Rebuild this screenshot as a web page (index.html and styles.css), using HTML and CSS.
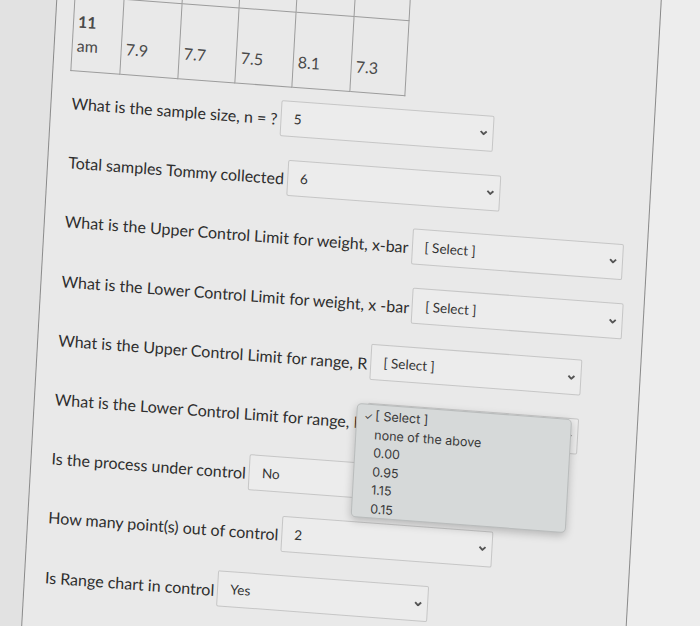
FILE: index.html
```html
<!DOCTYPE html>
<html>
<head>
<meta charset="utf-8">
<link rel="stylesheet" href="styles.css">
</head>
<body>
<div class="stage">
  <div class="panel">
    <table class="data">
      <tr class="prev">
        <td class="c0"></td><td class="c1"></td><td class="c2"></td><td class="c3"></td><td class="c4"></td><td class="c5"></td>
      </tr>
      <tr class="last">
        <td class="c0 time"><span class="hr">11</span><br>am</td>
        <td class="c1">7.9</td>
        <td class="c2">7.7</td>
        <td class="c3">7.5</td>
        <td class="c4">8.1</td>
        <td class="c5">7.3</td>
      </tr>
    </table>

    <div class="q first">
      <span class="lbl">What is the sample size, n = ?</span>
      <div class="sel wide"><span class="val">5</span><svg class="chev" viewBox="0 0 8 5"><polyline points="1,1 4,4 7,1"/></svg></div>
    </div>
    <div class="q">
      <span class="lbl">Total samples Tommy collected</span>
      <div class="sel wide"><span class="val">6</span><svg class="chev" viewBox="0 0 8 5"><polyline points="1,1 4,4 7,1"/></svg></div>
    </div>
    <div class="q">
      <span class="lbl">What is the Upper Control Limit for weight, x-bar</span>
      <div class="sel"><span class="val">[ Select ]</span><svg class="chev" viewBox="0 0 8 5"><polyline points="1,1 4,4 7,1"/></svg></div>
    </div>
    <div class="q">
      <span class="lbl">What is the Lower Control Limit for weight, x -bar</span>
      <div class="sel"><span class="val">[ Select ]</span><svg class="chev" viewBox="0 0 8 5"><polyline points="1,1 4,4 7,1"/></svg></div>
    </div>
    <div class="q">
      <span class="lbl">What is the Upper Control Limit for range, R</span>
      <div class="sel"><span class="val">[ Select ]</span><svg class="chev" viewBox="0 0 8 5"><polyline points="1,1 4,4 7,1"/></svg></div>
    </div>
    <div class="q open">
      <span class="lbl">What is the Lower Control Limit for range, R</span>
      <div class="sel"><span class="val">[ Select ]</span><svg class="chev" viewBox="0 0 8 5"><polyline points="1,1 4,4 7,1"/></svg></div>
      <ul class="menu">
        <li class="chosen"><span class="tick">✓</span>[ Select ]</li>
        <li>none of the above</li>
        <li>0.00</li>
        <li>0.95</li>
        <li>1.15</li>
        <li>0.15</li>
      </ul>
    </div>
    <div class="q">
      <span class="lbl">Is the process under control</span>
      <div class="sel"><span class="val">No</span><svg class="chev" viewBox="0 0 8 5"><polyline points="1,1 4,4 7,1"/></svg></div>
    </div>
    <div class="q">
      <span class="lbl">How many point(s) out of control</span>
      <div class="sel"><span class="val">2</span><svg class="chev" viewBox="0 0 8 5"><polyline points="1,1 4,4 7,1"/></svg></div>
    </div>
    <div class="q">
      <span class="lbl">Is Range chart in control</span>
      <div class="sel"><span class="val">Yes</span><svg class="chev" viewBox="0 0 8 5"><polyline points="1,1 4,4 7,1"/></svg></div>
    </div>
  </div>
</div>
</body>
</html>
```

FILE: styles.css
```css
html, body {
  margin: 0;
  padding: 0;
  width: 700px;
  height: 626px;
  overflow: hidden;
  background: #e2e2e2;
}

.stage {
  width: 700px;
  height: 626px;
  transform: matrix(1, 0.075, -0.056, 1, 0, 0);
  transform-origin: 350px 313px;
  display: flex;
  font-family: Lato, "Liberation Sans", sans-serif;
  color: #353535;
}

.panel {
  box-sizing: border-box;
  margin-left: 40px;
  margin-top: -150px;
  width: 603px;
  height: 926px;
  padding-top: 106px;
  padding-left: 17px;
  border-left: 1px solid #8a8a8a;
  border-right: 1px solid #8a8a8a;
  background: #e9e9e9;
  box-shadow: 300px 0 0 0 #ededed;
}

.data {
  border-collapse: collapse;
  font-size: 16px;
  color: #4a4a4a;
}

.data td {
  border: 1px solid #9c9c9c;
  vertical-align: bottom;
  line-height: 24px;
}

.data .prev td {
  height: 60px;
  padding: 0;
}

.data .last td {
  padding: 12.5px 0 13.5px 4px;
}

.data .c0 { width: 44px; }
.data .c1 { width: 53px; }
.data .c2 { width: 52px; }
.data .c3 { width: 52px; }
.data .c4 { width: 53px; }
.data .c5 { width: 50px; }

.data .time { padding-left: 5px; }
.data .hr { font-weight: 700; }

.q {
  display: flex;
  align-items: center;
  height: 36px;
  margin-left: 3px;
  margin-bottom: 23.2px;
  position: relative;
}

.q.first { margin-top: 12.5px; }

.q.open { z-index: 5; }

.lbl {
  font-size: 16px;
  white-space: nowrap;
  color: #2e2e2e;
  position: relative;
  top: 1px;
}

.sel {
  box-sizing: border-box;
  margin-left: 3px;
  width: 211px;
  height: 36px;
  border: 1px solid #c6c6c6;
  border-radius: 2px;
  background: #ececec;
  display: flex;
  align-items: center;
  padding-left: 12px;
  font-size: 13.5px;
  color: #333;
  flex-shrink: 0;
}

.sel.wide { width: 213px; }

.chev {
  margin-left: auto;
  margin-right: 5px;
  width: 8px;
  height: 5px;
  fill: none;
  stroke: #555;
  stroke-width: 1.9;
}

.menu {
  position: absolute;
  left: 301px;
  top: 1px;
  z-index: 10;
  width: 215px;
  height: 114px;
  box-sizing: border-box;
  margin: 0;
  padding: 1.5px 0 0 18px;
  list-style: none;
  background: #d6d9d9;
  border: 1px solid #b9bcbc;
  border-radius: 5px;
  box-shadow: 0 3px 8px rgba(0,0,0,0.22);
  font-family: Inter, "Noto Sans", sans-serif;
  font-size: 12.5px;
  color: #3a3a3a;
}

.menu li {
  height: 18.6px;
  line-height: 18.6px;
  position: relative;
}

.tick {
  position: absolute;
  left: -11px;
  font-size: 10px;
}
```
